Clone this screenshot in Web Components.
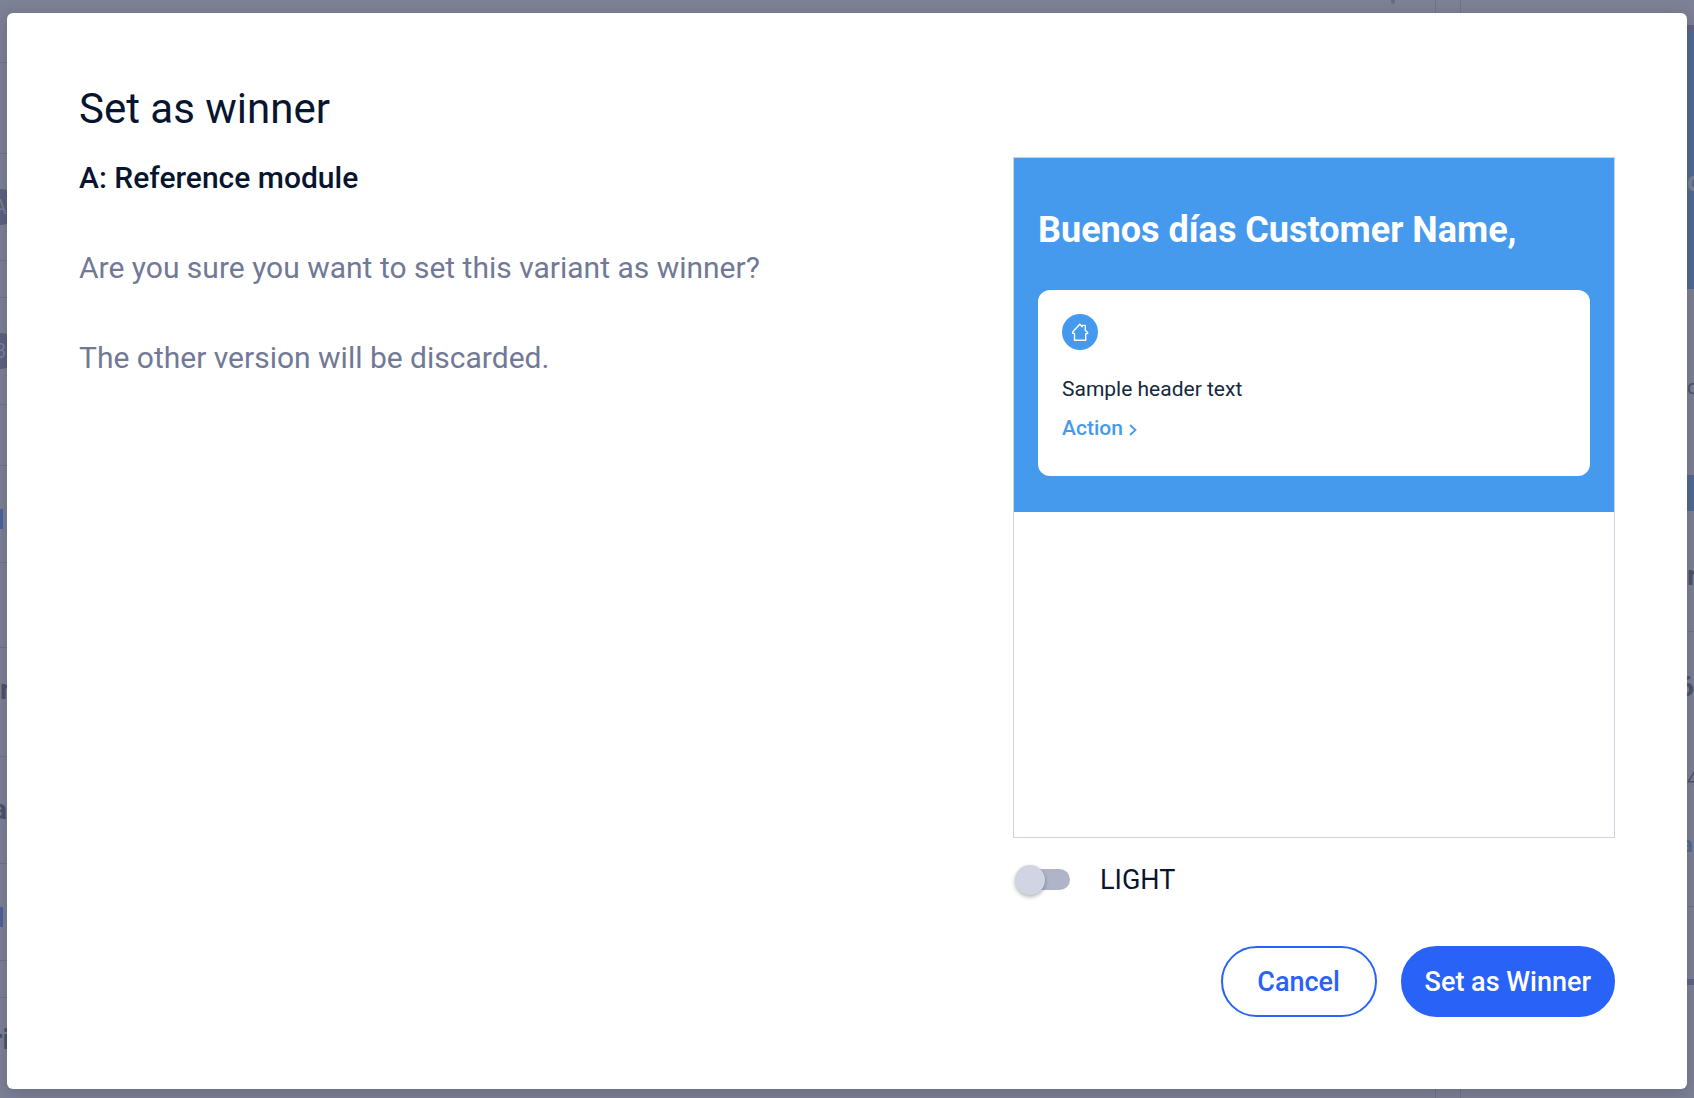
<!DOCTYPE html>
<html lang="en">
<head>
<meta charset="utf-8">
<title>Set as winner</title>
<style>
  html, body { height: 100%; margin: 0; }
  body { font-family: Roboto, "Liberation Sans", sans-serif; color: #07152f; background: #7d8195; overflow: hidden; }
</style>
</head>
<body>
<winner-page></winner-page>

<script>
const define = (name, html) => {
  const template = document.createElement('template');
  template.innerHTML = html;
  customElements.define(name, class extends HTMLElement {
    constructor() {
      super();
      this.attachShadow({ mode: 'open' }).append(template.content.cloneNode(true));
    }
  });
};

/* Dimmed page edges that stay visible around the dialog */
define('dimmed-page', `
  <style>
    :host { display: grid; grid-template-columns: 7px 1fr 7px; height: 100%; overflow: hidden; color: #4e536b; }
    .strip { overflow: hidden; }
    .row { box-sizing: border-box; border-bottom: 1px solid #6f7388; display: flex; align-items: center; white-space: nowrap; font-size: 28px; font-weight: 700; line-height: 32px; }
    .plain { border-bottom: 0; }
    .avatar { flex: none; width: 36px; height: 36px; margin-left: -18px; border-radius: 50%; background: #5d617e; color: #7c8094; font-size: 20px; font-weight: 400; line-height: 36px; text-align: center; }
    .chip { width: 3px; height: 20px; background: #4d6198; }
    .end { justify-content: flex-end; }
    .middle { display: flex; justify-content: flex-end; }
    .gutter { width: 24px; margin-right: 226px; border: solid #6f7388; border-width: 0 1px; }
    .dot { width: 4px; height: 4px; margin-right: 40px; border-radius: 0 0 2px 2px; background: #666a82; }
    .blue { background: #53698f; color: #7c8094; }
    .bar { background: #5f6481; }
    .regular { font-size: 20px; font-weight: 400; }
    .link { margin-left: -6px; font-size: 22px; color: #53698f; }
    .low { padding-top: 10px; }
    .lower { padding-top: 44px; }
    .high { padding-bottom: 24px; }
    .tail { margin-right: -3px; }
    .digit { margin-left: -9px; }
  </style>
  <div class="strip">
    <div class="row" style="height:63px"></div>
    <div class="row" style="height:91px"></div>
    <div class="row" style="height:107px"><span class="avatar">A</span></div>
    <div class="row" style="height:37px"></div>
    <div class="row" style="height:107px"><span class="avatar">B</span></div>
    <div class="row" style="height:61px"></div>
    <div class="row low" style="height:97px"><span class="chip"></span></div>
    <div class="row" style="height:85px"></div>
    <div class="row high" style="height:109px"><span>r</span></div>
    <div class="row end" style="height:107px"><span>a</span></div>
    <div class="row low" style="height:97px"><span class="chip"></span></div>
    <div class="row" style="height:37px"></div>
    <div class="row plain end" style="height:84px"><span class="tail">ri</span></div>
  </div>
  <div class="middle"><span class="dot"></span><span class="gutter"></span></div>
  <div class="strip">
    <div class="row plain" style="height:25px"></div>
    <div class="row plain bar" style="height:6px"></div>
    <div class="row plain blue lower" style="height:258px"><span>d</span></div>
    <div class="row plain low" style="height:186px"><span class="regular">d</span></div>
    <div class="row plain blue" style="height:36px"></div>
    <div class="row low" style="height:121px"><span>r</span></div>
    <div class="row plain" style="height:109px"><span class="digit">6</span></div>
    <div class="row plain low" style="height:66px"><span class="regular">4</span></div>
    <div class="row high" style="height:100px"><span class="link">a</span></div>
    <div class="row plain" style="height:72px"></div>
    <div class="row plain bar" style="height:6px"></div>
  </div>`);

define('pill-button', `
  <style>
    :host { display: block; }
    button { box-sizing: border-box; min-width: 156px; height: 71px; padding: 0 22px; border: 2px solid #2962f6; border-radius: 36px; background: #fff; color: #2962f6; font: 500 27px/32px Roboto, "Liberation Sans", sans-serif; cursor: pointer; }
    :host([primary]) button { background: #2962f6; color: #fff; }
  </style>
  <button type="button"><slot></slot></button>`);

define('theme-switch', `
  <style>
    :host { display: block; }
    label { display: flex; align-items: center; gap: 30px; font-size: 27px; line-height: 32px; cursor: pointer; }
    input { appearance: none; position: relative; width: 54px; height: 21px; margin: 0 0 1px 3px; border-radius: 11px; background: #b0b4c8; cursor: pointer; }
    input::before { content: ""; position: absolute; left: -1px; top: -4px; width: 30px; height: 30px; border-radius: 50%; background: #d1d4e3; box-shadow: 0 2px 4px rgba(0, 0, 0, .3); }
    input:checked::before { left: 25px; }
  </style>
  <label><input type="checkbox" role="switch"><slot></slot></label>`);

define('action-card', `
  <style>
    :host { display: flex; flex-direction: column; align-items: flex-start; height: 186px; box-sizing: border-box; padding: 24px; border-radius: 12px; background: #fff; color: #14293c; font-size: 21px; line-height: 24px; }
    svg { display: block; }
    p { margin: 27px 0 15px; }
    a { display: flex; align-items: center; gap: 6px; color: #469aee; font-weight: 500; text-decoration: none; }
    .chevron { margin-top: 4px; }
  </style>
  <svg width="36" height="36" viewBox="0 0 36 36" aria-hidden="true">
    <circle cx="18" cy="18" r="18" fill="#469aee"/>
    <path d="M12.500 26.300V19.400h-2l.5-1.800 6.800-7.300 2.300 2.400.2-1.300h3v4.900l2.200 2.100.2 1.200h-2v6.700z" fill="none" stroke="#fff" stroke-width="1.400" stroke-linejoin="round"/>
  </svg>
  <p><slot></slot></p>
  <a href="#"><slot name="action"></slot>
    <svg class="chevron" width="8" height="12" viewBox="0 0 8 12" aria-hidden="true"><path d="M1 1l5.500 5L1 11" fill="none" stroke="#469aee" stroke-width="1.800"/></svg>
  </a>`);

define('module-preview', `
  <style>
    :host { display: block; box-sizing: border-box; height: 681px; border: 1px solid #d0d2e0; background: #fff; }
    .module { padding: 48px 24px 36px; background: #469aee; }
    h3 { margin: 0 0 36px; color: #fff; font-size: 36px; font-weight: 700; line-height: 48px; white-space: nowrap; }
  </style>
  <div class="module"><h3><slot name="greeting"></slot></h3><slot></slot></div>`);

define('confirm-dialog', `
  <style>
    :host { display: flex; flex-direction: column; box-sizing: border-box; padding: 72px; border-radius: 6px; background: #fff; box-shadow: 0 4px 16px rgba(20, 24, 50, .2); }
    h1 { margin: 0 0 24px; font-size: 42px; font-weight: 400; line-height: 48px; }
    .body { display: flex; justify-content: space-between; gap: 48px; flex: 1; }
    .aside { flex: none; width: 602px; display: flex; flex-direction: column; gap: 26px; }
    .actions { display: flex; justify-content: flex-end; gap: 24px; }
  </style>
  <h1><slot name="title"></slot></h1>
  <div class="body"><slot></slot><div class="aside"><slot name="aside"></slot></div></div>
  <div class="actions"><slot name="actions"></slot></div>`);

define('winner-message', `
  <style>
    :host { display: block; font-size: 30px; line-height: 45px; color: #717996; }
    h2 { margin: -2px 0 45px; color: #07152f; font-size: 30px; font-weight: 500; line-height: 45px; }
    p { margin: 0 0 45px; }
  </style>
  <h2>A: Reference module</h2>
  <p>Are you sure you want to set this variant as winner?</p>
  <p>The other version will be discarded.</p>`);

define('winner-page', `
  <style>
    :host { display: block; position: relative; height: 100%; }
    confirm-dialog { position: absolute; inset: 13px 7px 9px 7px; }
  </style>
  <dimmed-page></dimmed-page>
  <confirm-dialog role="dialog" aria-modal="true">
    <span slot="title">Set as winner</span>
    <winner-message></winner-message>
    <module-preview slot="aside">
      <span slot="greeting">Buenos días Customer Name,</span>
      <action-card>Sample header text<span slot="action">Action</span></action-card>
    </module-preview>
    <theme-switch slot="aside">LIGHT</theme-switch>
    <pill-button slot="actions">Cancel</pill-button>
    <pill-button slot="actions" primary>Set as Winner</pill-button>
  </confirm-dialog>`);
</script>
</body>
</html>
